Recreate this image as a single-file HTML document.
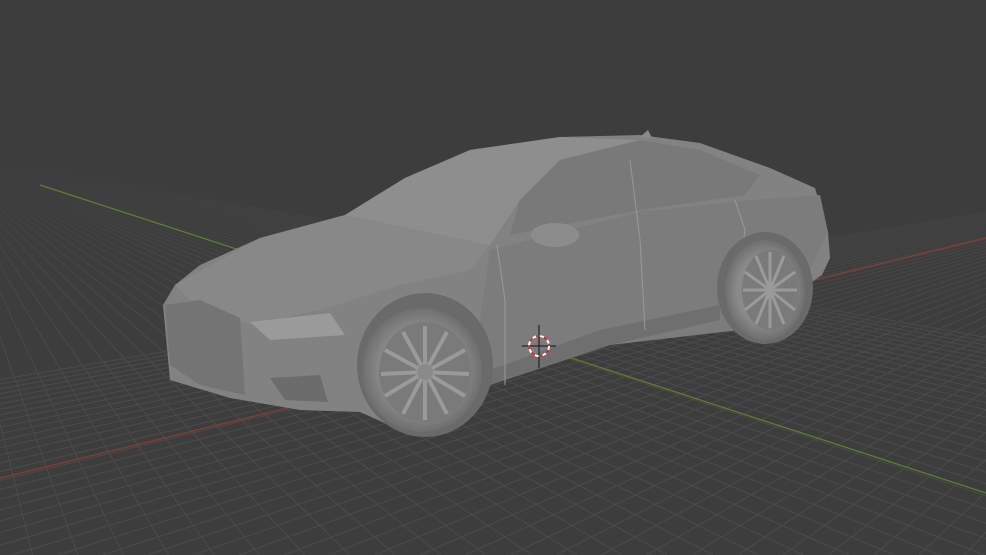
<!DOCTYPE html>
<html><head><meta charset="utf-8"><style>
html,body{margin:0;padding:0;background:#3d3d3d;width:986px;height:555px;overflow:hidden}
#w{position:relative;width:986px;height:555px;overflow:hidden}
svg{display:block;overflow:hidden}
</style></head><body><div id="w">
<svg id="s" width="986" height="555" viewBox="0 0 986 555" xmlns="http://www.w3.org/2000/svg">
<defs>
<linearGradient id="fade" x1="0" y1="0" x2="0" y2="1">
<stop offset="0" stop-color="#3d3d3d" stop-opacity="1"/>
<stop offset="0.3" stop-color="#3d3d3d" stop-opacity="1"/>
<stop offset="0.45" stop-color="#3d3d3d" stop-opacity="0.4"/>
<stop offset="0.65" stop-color="#3d3d3d" stop-opacity="0"/>
</linearGradient>
<radialGradient id="tire" cx="0.5" cy="0.5" r="0.5">
<stop offset="0.7" stop-color="#8a8a8a"/><stop offset="1" stop-color="#6f6f6f"/>
</radialGradient>
<clipPath id="c"><rect width="986" height="555"/></clipPath>
</defs>
<rect width="986" height="555" fill="#3d3d3d"/>
<g id="grid" stroke="#4b4b4b" stroke-width="1" clip-path="url(#c)"></g>
<rect width="986" height="555" fill="url(#fade)"/>
<line x1="0" y1="478" x2="986" y2="238" stroke="#8a3a3a" stroke-width="1.3"/>
<line x1="40" y1="185" x2="986" y2="493" stroke="#5f7d33" stroke-width="1.3"/>
<path d="M170,380 L163,305 L175,285 L200,265 L260,238 L345,215 L405,178 L470,150 L560,137 L640,135 L700,143 L770,168 L815,188 L828,232 L830,258 L822,275 L800,290 L740,330 L700,330 L610,345 L490,385 L465,420 L400,430 L360,412 L300,410 L230,398 Z" fill="#828282"/>
<path d="M345,215 L405,178 L470,150 L560,137 L640,140 L560,160 L520,200 L490,245 Z" fill="#8e8e8e"/>
<path d="M520,200 L560,160 L640,140 L700,150 L760,175 L745,195 L640,210 L510,235 Z" fill="#797979"/>
<path d="M175,285 L260,238 L345,215 L490,245 L470,270 L400,285 L320,310 L250,325 L190,300 Z" fill="#888"/>
<path d="M490,250 L640,212 L750,200 L820,195 L828,232 L800,290 L740,330 L610,345 L490,385 L480,320 Z" fill="#7c7c7c"/>
<path d="M490,370 L600,330 L720,305 L720,320 L610,345 L490,385 Z" fill="#6f6f6f"/>
<ellipse cx="555" cy="235" rx="24" ry="12" fill="#8c8c8c"/>
<path d="M250,322 L330,313 L345,335 L270,340 Z" fill="#9a9a9a"/>
<path d="M165,305 L200,300 L240,318 L245,395 L200,385 L170,365 Z" fill="#747474"/>
<path d="M270,378 L320,375 L328,402 L285,400 Z" fill="#6c6c6c"/>
<path d="M497,245 L505,300 L505,385" stroke="#999" stroke-width="1" fill="none"/>
<path d="M630,160 L640,240 L645,330" stroke="#999" stroke-width="1" fill="none"/>
<path d="M735,200 L745,230 L735,300" stroke="#999" stroke-width="1" fill="none"/>
<ellipse cx="425" cy="365" rx="68" ry="72" fill="#6a6a6a"/>
<ellipse cx="765" cy="288" rx="48" ry="56" fill="#6a6a6a"/>
<ellipse cx="422" cy="370" rx="60" ry="62" fill="url(#tire)"/>
<ellipse cx="425" cy="372" rx="46" ry="50" fill="#7a7a7a"/>
<g stroke="#9a9a9a" stroke-width="4" transform="translate(425 372)">
<line x1="0" y1="0" x2="0" y2="-46"/><line x1="0" y1="0" x2="40" y2="-22"/><line x1="0" y1="0" x2="40" y2="24"/>
<line x1="0" y1="0" x2="0" y2="48"/><line x1="0" y1="0" x2="-40" y2="24"/><line x1="0" y1="0" x2="-40" y2="-22"/>
<line x1="0" y1="0" x2="22" y2="-40"/><line x1="0" y1="0" x2="44" y2="2"/><line x1="0" y1="0" x2="22" y2="42"/>
<line x1="0" y1="0" x2="-22" y2="42"/><line x1="0" y1="0" x2="-44" y2="2"/><line x1="0" y1="0" x2="-22" y2="-40"/>
</g>
<circle cx="425" cy="372" r="8" fill="#8a8a8a"/>
<ellipse cx="765" cy="290" rx="40" ry="50" fill="url(#tire)"/>
<ellipse cx="770" cy="290" rx="28" ry="40" fill="#7a7a7a"/>
<g stroke="#9a9a9a" stroke-width="3" transform="translate(770 290)">
<line x1="0" y1="0" x2="0" y2="-38"/><line x1="0" y1="0" x2="25" y2="-18"/><line x1="0" y1="0" x2="25" y2="20"/>
<line x1="0" y1="0" x2="0" y2="38"/><line x1="0" y1="0" x2="-25" y2="20"/><line x1="0" y1="0" x2="-25" y2="-18"/>
<line x1="0" y1="0" x2="14" y2="-34"/><line x1="0" y1="0" x2="27" y2="0"/><line x1="0" y1="0" x2="14" y2="34"/>
<line x1="0" y1="0" x2="-14" y2="34"/><line x1="0" y1="0" x2="-27" y2="0"/><line x1="0" y1="0" x2="-14" y2="-34"/>
</g>
<path d="M640,137 L648,130 L652,138 Z" fill="#8a8a8a"/>
<line x1="539" y1="325" x2="539" y2="368" stroke="#111" stroke-width="1"/>
<line x1="522" y1="346" x2="556" y2="346" stroke="#111" stroke-width="1"/>
<circle cx="539" cy="346" r="10" fill="none" stroke="#fff" stroke-width="2" stroke-dasharray="4 4"/>
<circle cx="539" cy="346" r="10" fill="none" stroke="#c33" stroke-width="2" stroke-dasharray="4 4" stroke-dashoffset="4"/>
</svg></div>
<script>
var g=document.getElementById('grid'),ns='http://www.w3.org/2000/svg';
function L(x1,y1,x2,y2){var l=document.createElementNS(ns,'line');l.setAttribute('x1',x1);l.setAttribute('y1',y1);l.setAttribute('x2',x2);l.setAttribute('y2',y2);g.appendChild(l);}
var vr=[1350,150],vl=[-67,150],f=(555-150)/1250;
for(var x=-6000;x<3000;x+=140){L(vr[0],vr[1],vr[0]+(x-vr[0])*f,555);}
for(var x=-2000;x<7000;x+=140){L(vl[0],vl[1],vl[0]+(x-vl[0])*f,555);}
</script>
</body></html>
